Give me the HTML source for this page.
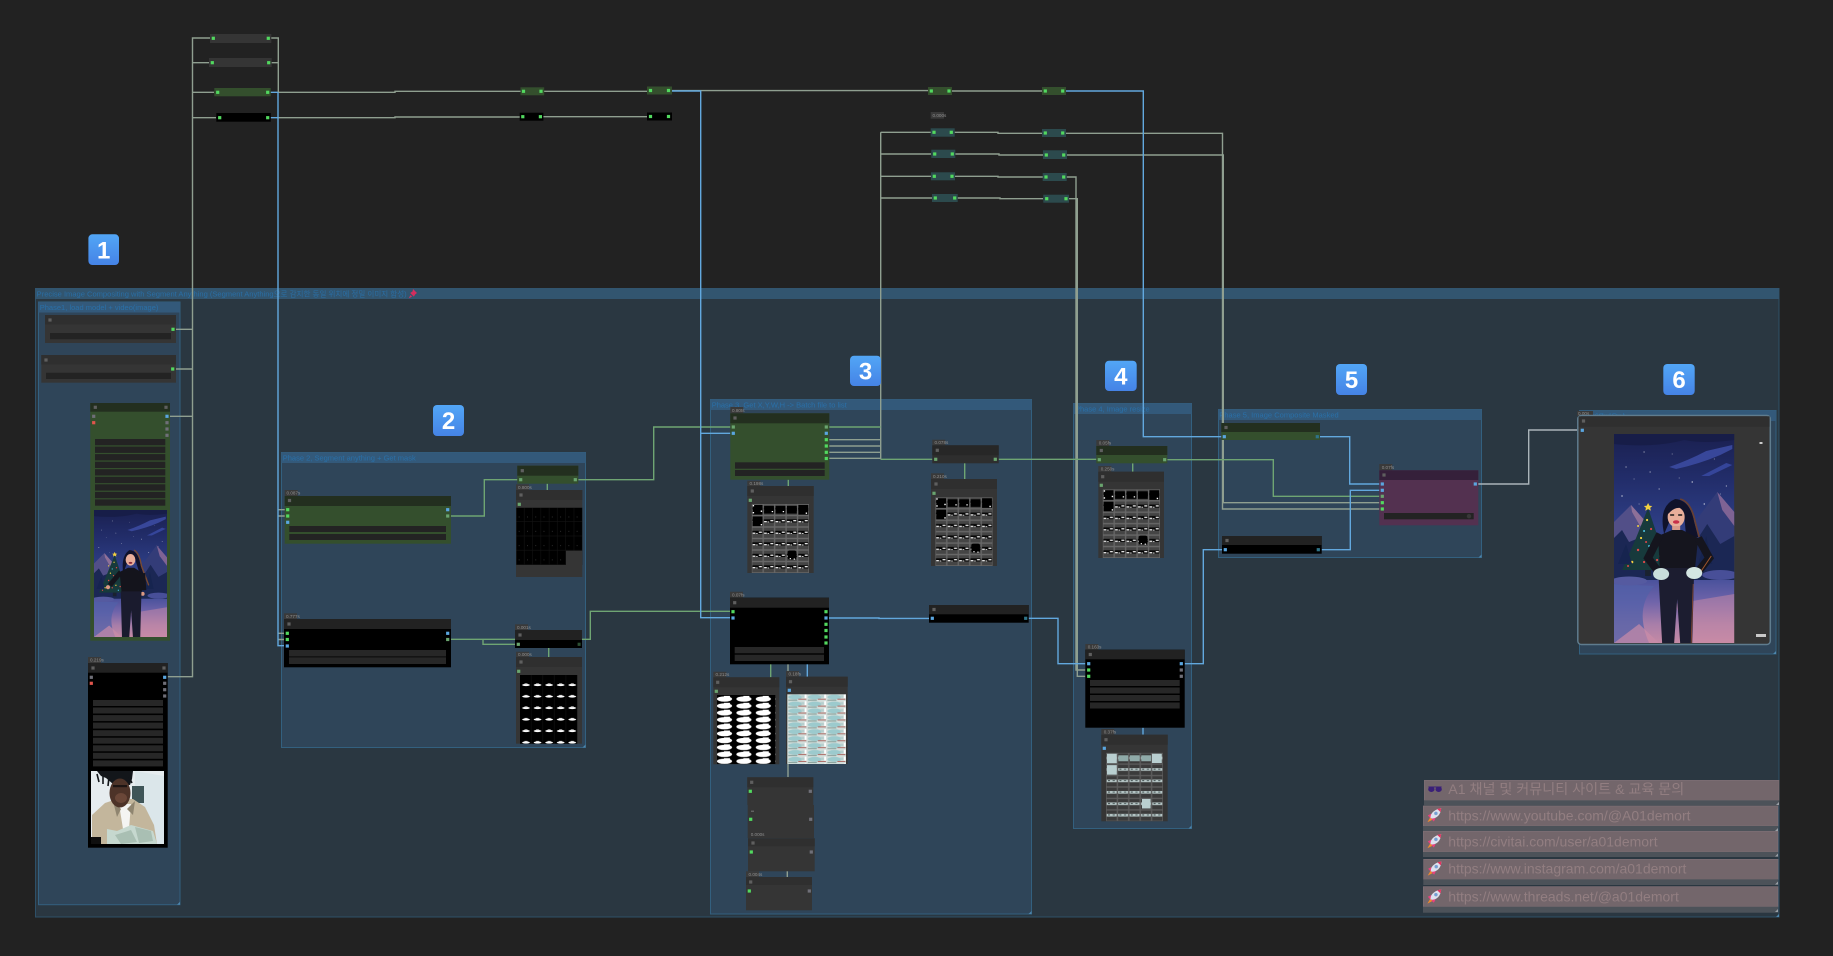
<!DOCTYPE html>
<html lang="en">
<head>
<meta charset="utf-8">
<title>ComfyUI workflow</title>
<style>
html,body{margin:0;padding:0;background:#222;width:1833px;height:956px;overflow:hidden}
svg{display:block}
.g{font:7.5px "Liberation Sans","Noto Sans CJK KR",sans-serif;fill:#2a70a8}
.o{font:7.5px "Liberation Sans","Noto Sans CJK KR",sans-serif;fill:#2a6ea4}
.t{font:4.6px "Liberation Sans",sans-serif;fill:#8f8f8f}
.n{font:14px "Liberation Sans","Noto Sans CJK KR",sans-serif;fill:#927e81}
.b{font:bold 24px "Liberation Sans",sans-serif;fill:#fff;text-anchor:middle}
.tb{fill:#3a3a3a}
.w{fill:#232323}
.wb{fill:#272727}
.grp{fill:#2f4559;stroke:#33607f;stroke-width:1}
.gt{fill:#33597a}
.nb{fill:#353535}
.nh{fill:#2f2f2f}
.bh{fill:#222}
.bk{fill:#000}
.gb{fill:#344f2d}
.gh{fill:#232f1f}
.wire{fill:none;stroke-width:1.4}
</style>
</head>
<body>
<svg xmlns="http://www.w3.org/2000/svg" width="1833" height="956" viewBox="0 0 1833 956">
<defs>
<rect id="pg" x="-1.6" y="-1.6" width="3.2" height="3.2" fill="#52d95f"/>
<rect id="pd" x="-1.6" y="-1.6" width="3.2" height="3.2" fill="#6aa56f"/>
<rect id="pb" x="-1.6" y="-1.6" width="3.2" height="3.2" fill="#5aa6e0"/>
<rect id="pt" x="-1.6" y="-1.6" width="3.2" height="3.2" fill="#2f7488"/>
<rect id="pw" x="-1.6" y="-1.6" width="3.2" height="3.2" fill="#6f6f78"/>
<rect id="pr" x="-1.6" y="-1.6" width="3.2" height="3.2" fill="#e0554c"/>
<rect id="ic" x="-1.6" y="-1.6" width="3.2" height="3.2" fill="#5f5f5f"/>
<linearGradient id="bd" x1="0" y1="0" x2="0" y2="1"><stop offset="0" stop-color="#52a6f6"/><stop offset="1" stop-color="#4583e6"/></linearGradient>
<linearGradient id="sky" x1="0" y1="0" x2="0" y2="1"><stop offset="0" stop-color="#1a2050"/><stop offset=".3" stop-color="#222d6a"/><stop offset=".65" stop-color="#2f4088"/><stop offset="1" stop-color="#384890"/></linearGradient>
<linearGradient id="snow" x1="0" y1="0" x2="0" y2="1"><stop offset="0" stop-color="#4a529c"/><stop offset=".35" stop-color="#7064aa"/><stop offset=".7" stop-color="#a87ea9"/><stop offset="1" stop-color="#c58aa5"/></linearGradient>

<pattern id="pa1" width="11.46" height="11.5" patternUnits="userSpaceOnUse">
<rect width="11.46" height="11.5" fill="#686868"/><rect x=".7" y=".7" width="10.1" height="10.1" fill="#454545"/>
<rect x=".7" y="3.8" width="10.1" height="3.2" fill="#060606"/>
<rect x=".9" y="5.6" width="2.8" height="1.2" fill="#fff"/><rect x="7.2" y="4.6" width="3" height="1.2" fill="#fff"/><rect x="4.4" y="6" width="1.6" height=".9" fill="#ddd"/>
</pattern>
<pattern id="pa2" width="8.28" height="14.3" patternUnits="userSpaceOnUse">
<rect width="8.28" height="14.3" fill="#000"/><path d="M8 0V14.3M0 14H8.28" stroke="#131313" stroke-width=".6"/>
<rect x="2.5" y="9" width=".7" height=".6" fill="#666"/>
</pattern>
<pattern id="pa3" width="11.56" height="11.5" patternUnits="userSpaceOnUse">
<rect width="11.56" height="11.5" fill="#000"/><ellipse cx="6" cy="10" rx="3.9" ry="1.1" fill="#fff"/><rect x="4.5" y="8.4" width="3" height="1.2" fill="#ddd"/>
<path d="M11.2 0V11.5" stroke="#151515" stroke-width=".5"/>
</pattern>
<pattern id="pa4" width="19.4" height="6.92" patternUnits="userSpaceOnUse">
<rect width="19.4" height="6.92" fill="#000"/><ellipse cx="7.5" cy="4" rx="7.6" ry="2.7" fill="#fff"/><rect x="7" y=".9" width="6" height="2" fill="#fff"/>
</pattern>
<pattern id="pa5" width="19.55" height="6.92" patternUnits="userSpaceOnUse">
<rect width="19.55" height="6.92" fill="#d3dedb"/><ellipse cx="8" cy="2.8" rx="7" ry="2.4" fill="#9ccacd"/><rect x="1" y="5.3" width="9" height="1.2" fill="#8ea5a0"/>
<rect x="11" y="4.4" width="8" height="1" fill="#ad6a64"/><rect x="17.4" y="0" width="1.8" height="4" fill="#fff"/><rect x="14" y="1" width="3" height="2.4" fill="#b6cfce"/>
</pattern>
<pattern id="pa6" width="11.4" height="11.5" patternUnits="userSpaceOnUse">
<rect width="11.4" height="11.5" fill="#5c5c5c"/><rect x=".7" y=".7" width="10" height="10.1" fill="#3b3b3b"/>
<rect x=".7" y="4" width="10" height="2.7" fill="#b4c4c4"/><rect x="2" y="4.6" width="2" height="1" fill="#3d4a4a"/><rect x="6.6" y="4.6" width="2.2" height="1" fill="#4a5a5a"/>
</pattern>

<symbol id="gr1" viewBox="0 0 57.3 69" preserveAspectRatio="none">
<rect width="57.3" height="69" fill="url(#pa1)"/>
<g fill="#000"><rect x="1" y="1" width="9.8" height="9.6"/><rect x="12.4" y="2" width="9.8" height="7.6"/><rect x="23.9" y="2" width="9.8" height="7.6"/><rect x="35.3" y="2" width="9.8" height="7.6"/><rect x="46.7" y="1" width="9.8" height="9.6"/><rect x="1" y="12.5" width="9.8" height="9.6"/><rect x="36" y="46.5" width="8.6" height="9" rx="2"/></g>
<g fill="#fff"><rect x="1" y="1" width="1.4" height="1.4"/><rect x="1" y="8" width="1.4" height="1.4"/><rect x="9" y="6.5" width="1.4" height="1.4"/><rect x="20" y="7" width="1.4" height="1.2"/><rect x="31" y="7" width="1.4" height="1.2"/><rect x="54" y="8.5" width="1.4" height="1.4"/><rect x="9" y="20" width="1.4" height="1.4"/><rect x="38" y="54" width="1.2" height="1.2"/><rect x="42" y="54.5" width="1.2" height="1.2"/></g>
</symbol>
<symbol id="gr2" viewBox="0 0 57 69" preserveAspectRatio="none">
<rect width="57" height="69" fill="url(#pa6)"/>
<g fill="#b9cfd0"><rect x="1" y="1" width="9.8" height="9.6"/><rect x="1" y="12.5" width="9.8" height="9.6"/><rect x="46" y="1" width="9.8" height="9.4"/><rect x="36" y="46.5" width="8.6" height="9.6"/></g>
<g fill="#8faaa8"><rect x="12.4" y="2.6" width="9.8" height="6"/><rect x="23.9" y="2.6" width="9.8" height="6"/><rect x="35.3" y="2.6" width="9.8" height="6"/></g>
</symbol>

<symbol id="sc" viewBox="0 0 120 209" preserveAspectRatio="none">
<rect width="120" height="150" fill="url(#sky)"/>
<path d="M0 0H120V6Q90 10 70 6Q40 14 0 10Z" fill="#171d48"/>
<path d="M55 33Q75 26 92 17L118 11V15L106 21Q85 30 62 35Z" fill="#38479a"/>
<path d="M87 42L112 29L118 31L95 42Z" fill="#35459a"/>
<g fill="#fff"><circle cx="12" cy="33" r=".5"/><circle cx="30" cy="18" r=".5"/><circle cx="58" cy="20" r=".4"/><circle cx="78" cy="48" r=".6"/><circle cx="112" cy="52" r=".5"/><circle cx="8" cy="62" r=".6"/><circle cx="45" cy="55" r=".5"/><circle cx="100" cy="25" r=".4"/><circle cx="25" cy="70" r=".4"/><circle cx="90" cy="70" r=".6"/><circle cx="20" cy="45" r=".4"/><circle cx="65" cy="44" r=".4"/><circle cx="36" cy="38" r=".5"/><circle cx="106" cy="60" r=".4"/></g>
<path d="M0 88L17 71L32 88L40 118H0Z" fill="#524f88"/>
<path d="M17 71L32 88L26 92L18 78Z" fill="#8e7098"/>
<path d="M70 102L103 58L120 78V125H66Z" fill="#333c78"/>
<path d="M103 58L120 78V92L108 76Z" fill="#7f6394"/>
<path d="M0 104L8 96L15 108L30 102L72 102L80 110L93 90L106 110L120 102V150H0Z" fill="#1b2754"/>
<rect y="146" width="120" height="63" fill="url(#snow)"/>
<path d="M0 150L40 152Q20 175 35 209H0Z" fill="#5260a8" opacity=".75"/>
<path d="M60 170L120 160V209H80Z" fill="#cb8ca6" opacity=".5"/>
<path d="M0 209L25 190L45 209Z" fill="#c98ca8" opacity=".7"/>
<ellipse cx="15" cy="147" rx="18" ry="4.5" fill="#555aa0"/>
<ellipse cx="106" cy="141" rx="18" ry="5" fill="#484f98"/>
<path d="M34 74L44 104L48 118L52 136H8L16 118L22 104Z" fill="#173a3c"/>
<rect x="31" y="136" width="6" height="6" fill="#1a2230"/>
<path d="M34 69l1.4 2.8 2.8.2-2.1 1.9.7 2.8-2.8-1.6-2.8 1.6.7-2.8-2.1-1.9 2.8-.2z" fill="#f2d040"/>
<g fill="#f2d040"><circle cx="33" cy="86" r="1.1"/><circle cx="27" cy="104" r="1.1"/><circle cx="40" cy="110" r="1.1"/><circle cx="18" cy="128" r="1.3"/><circle cx="36" cy="124" r="1.1"/><circle cx="46" cy="122" r="1"/><circle cx="24" cy="92" r="1"/></g>
<g fill="#e04848"><circle cx="37" cy="95" r="1.1"/><circle cx="24" cy="116" r="1.2"/><circle cx="30" cy="128" r="1.1"/><circle cx="43" cy="126" r="1.1"/><circle cx="32" cy="108" r="1"/><circle cx="14" cy="132" r="1"/></g>
<g fill="#4fc8e8"><circle cx="30" cy="97" r="1"/><circle cx="35" cy="112" r="1"/><circle cx="14" cy="122" r="1"/><circle cx="40" cy="132" r="1"/></g>
<path d="M92 102L98 130H84ZM12 110L18 130H4Z" fill="#16244f"/>
</symbol>

<symbol id="fg" viewBox="0 0 120 209" preserveAspectRatio="none">
<path d="M50 100Q44 72 61 65Q76 66 80 88L84 103L72 104L70 80L56 86Z" fill="#10122a"/>
<path d="M66 65Q77 68 81 88L85 103" fill="none" stroke="#6a4030" stroke-width="1.6"/>
<ellipse cx="62" cy="83" rx="8.5" ry="10" fill="#e8ae9a"/>
<path d="M54 76Q62 68 70 78L66 74Q60 73 54 80Z" fill="#10122a"/>
<path d="M56 81h4M64 81h4" stroke="#1a1a1a" stroke-width="1.4"/>
<ellipse cx="62" cy="88" rx="3.2" ry="1.8" fill="#c8304a"/>
<rect x="58" y="92" width="8" height="6" fill="#d89a8a"/>
<path d="M44 102L58 96H68L84 104L80 142H46Z" fill="#15151e"/>
<path d="M46 100L34 124L46 140" fill="none" stroke="#15151e" stroke-width="8"/>
<path d="M84 104L95 124L82 140" fill="none" stroke="#15151e" stroke-width="8"/>
<path d="M97 122L85 140" fill="none" stroke="#a0562c" stroke-width="1"/>
<path d="M44 134H80L78 209H66L63 165L60 209H48Z" fill="#1c1d30"/>
<path d="M79 150L77 209" fill="none" stroke="#8a4a30" stroke-width=".8"/>
<ellipse cx="47" cy="140" rx="8" ry="6" fill="#c9dedb"/>
<ellipse cx="80" cy="139" rx="8" ry="6" fill="#d4e6e2"/>
</symbol>
<symbol id="fs" viewBox="0 0 120 209" preserveAspectRatio="none">
<path d="M48 104Q44 76 58 66Q72 66 76 88L86 120L76 108L68 82L54 88Z" fill="#10122a"/>
<path d="M66 66Q75 72 78 92L90 124" fill="none" stroke="#7a4a30" stroke-width="2.2"/>
<ellipse cx="60" cy="82" rx="8" ry="9.5" fill="#e8ae9a"/>
<ellipse cx="60" cy="87" rx="3" ry="1.6" fill="#8a2a3a"/>
<path d="M42 102L56 95H66L80 104L78 142H46Z" fill="#14141c"/>
<path d="M44 102L26 124" fill="none" stroke="#14141c" stroke-width="8"/>
<path d="M80 104L82 132" fill="none" stroke="#14141c" stroke-width="8"/>
<circle cx="23" cy="127" r="3.4" fill="#dd9a84"/><circle cx="80" cy="138" r="3.2" fill="#dd9a84"/>
<path d="M44 134H78L76 209H64L61 165L58 209H46Z" fill="#1a1b2e"/>
</symbol>

<symbol id="pf" viewBox="0 0 73 73" preserveAspectRatio="none">
<rect width="73" height="73" fill="#e6ecef"/>
<path d="M44 0L73 5V73H44Z" fill="#dbe6ea"/>
<rect x="41" y="15" width="12" height="17" fill="#3f5558"/>
<path d="M1 44L14 32L26 28H42L54 36L63 54L66 73H1Z" fill="#c3b69c"/>
<path d="M28 33H40L38 58H32Z" fill="#f4f4f2"/>
<path d="M22 30L30 38L26 46ZM44 30L36 38L42 44Z" fill="#8f8570"/>
<path d="M6 0H42L41 8L39 14L22 13L15 7L10 5Z" fill="#13161a"/>
<path d="M6 3l2 8M12 4l0 9M18 6l-1 9M38 6l3 6" stroke="#13161a" stroke-width="1.6"/>
<ellipse cx="29" cy="22" rx="10.5" ry="14.5" fill="#4d3328"/>
<rect x="22" y="14" width="14" height="2.2" fill="#1d1513"/>
<ellipse cx="30" cy="27" rx="6" ry="5" fill="#6a4738"/>
<path d="M16 58L26 60L40 54L62 60L66 73H16Z" fill="#c6d8cf"/>
<path d="M24 64l16-5 6 12-16 2zM44 56l16 4 2 10-14 2z" fill="#a9bfb3"/>
<rect x="0" y="66" width="10" height="7" fill="#0f0f0f"/>
</symbol>

<symbol id="rk" viewBox="0 0 36 36">
<path d="M10 15L2 19L8 26L14 20Z" fill="#e8427e"/>
<path d="M21 26L17 34L10 28L16 22Z" fill="#e8427e"/>
<path d="M8 24L1 36L13 30Z" fill="#f08a2c"/>
<path d="M9 26C7 15 18 4 35 1C34 19 21 29 9 26Z" fill="#dde1ee"/>
<path d="M25 3L35 1L33.4 11Z" fill="#e3345f"/>
<circle cx="22" cy="14" r="4" fill="#6fa0da" stroke="#9aa3b8" stroke-width="1"/>
</symbol>
<symbol id="sg" viewBox="0 0 44 21">
<path d="M2 5H42" stroke="#3a1f78" stroke-width="3"/>
<ellipse cx="11" cy="12" rx="9.5" ry="8" fill="#3a1f78"/><ellipse cx="33" cy="12" rx="9.5" ry="8" fill="#3a1f78"/>
</symbol>
</defs>

<rect width="1833" height="956" fill="#222"/>

<!-- outer group -->
<rect x="35.5" y="288.5" width="1743.5" height="628.5" fill="#2a3741" stroke="#2e5068"/>
<rect x="35" y="288" width="1744" height="11" fill="#32556f"/>
<text class="o" x="36.7" y="296.3" textLength="370" lengthAdjust="spacingAndGlyphs">Precise Image Compositing with Segment Anything (Segment Anything으로 감지한 동일 위치에 정밀 이미지 합성)</text>
<path d="M413 289l4 4-1.6 1.2-1.6 2.4-3.6-3.6 2.4-1.6zM410.5 295l-1.8 3.4 3.4-1.8z" fill="#d42e5e"/>

<!-- groups -->
<rect class="grp" x="38.5" y="302" width="141.5" height="602.7"/><rect class="gt" x="38.5" y="302" width="141.5" height="10.5"/>
<text class="g" x="39.7" y="309.8" textLength="118.7">Phase1, load model + video(image)</text>
<rect class="grp" x="281.5" y="452.5" width="304" height="295"/><rect class="gt" x="281.5" y="452.5" width="304" height="10.5"/>
<text class="g" x="282.7" y="460.5" textLength="133">Phase 2, Segment anything + Get mask</text>
<rect class="grp" x="710.5" y="399.5" width="321" height="514.5"/><rect class="gt" x="710.5" y="399.5" width="321" height="10.5"/>
<text class="g" x="711.7" y="407.5" textLength="135">Phase 3, Get X,Y,W,H -&gt; Batch file to list</text>
<rect class="grp" x="1073.5" y="403.5" width="118" height="425"/><rect class="gt" x="1073.5" y="403.5" width="118" height="10.5"/>
<text class="g" x="1075" y="411.5" textLength="74.7">Phase 4, Image resize</text>
<rect class="grp" x="1218.5" y="409.5" width="263" height="148"/><rect class="gt" x="1218.5" y="409.5" width="263" height="10.5"/>
<text class="g" x="1219.3" y="417.5" textLength="119.4">Phase 5, Image Composite Masked</text>
<rect class="grp" x="1579.5" y="410.5" width="196.5" height="243.5"/><rect class="gt" x="1579.5" y="410.5" width="196.5" height="10.5"/>
<text class="g" x="1581" y="418.5" textLength="44">Phase 6, Check Result</text>
<path d="M180 904.7v-3l-3 3zM585.5 747.5v-3l-3 3zM1031.5 914v-3l-3 3zM1191.5 828.5v-3l-3 3zM1481.5 557.5v-3l-3 3zM1776 654v-3l-3 3zM1779 917v-3l-3 3z" fill="#4d86ad"/>

<!-- wires -->
<g class="wire" stroke="#8f9f90">
<path d="M210 38H192.5V676.7H167.7M209 62.7H192.5M214 92.3H192.5M216 117.7H192.5M176 329.3H192.5M176 369H192.5M170 416.3H192.5"/>
<path d="M271 38H278.3V92M271.5 62.7H278.3"/>
<path d="M278 92.3H395V91.3H647M672 90.6H929M952 91H1042"/>
<path d="M278 117.7H395V117H520M543 116.7H647"/>
<path d="M278 509.7H285M278 516H285M278 633.3H284M278 639.5H284"/>
<path d="M880.7 132.3V459.3M880.7 132.3H931M880.7 154H931M880.7 176.3H931M880.7 198H932"/>
<path d="M954.7 132.3H998V133.3H1042M955.3 154H999V155H1043M955 176.3H998V177H1043M957.7 198H1000V198.7H1043"/>
<path d="M1066 133.3H1222.5V509H1379.3M1067 155H1223.3V502.7H1379.3"/>
<path d="M1066.7 177H1076V670H1085.3M1069 198.7H1077.3V676.3H1085.3"/>
<path d="M829 439.7H880.7M829 446H880.7M829 452.3H880.7M829 458.3H880.7"/>
<path d="M788 664V777M787.3 871V877"/>
</g>
<g class="wire" stroke="#6fa573">
<path d="M829 427H880.7M880.7 459.3H932.3M998.7 459.3H1096.3M1167.3 459.7H1273.3V496.3H1379.3"/>
<path d="M578.3 479.7H653.7V427H730.3M451 516H484.3V479.7H517.3M451 639.3H515M483 639.3V644.3H515M582 639.3H590.3V611.3H730"/>
<path d="M547.3 483.7V490M548.7 648V657M788.3 479.7V486M964.7 463V479M770.7 664V677.3M1132.7 463.3V472"/>
</g>
<g class="wire" stroke="#62a8de">
<path d="M270.7 92.3H278M270.7 117.7H278M278 92V645.7H284"/>
<path d="M672 91H700.7V617.7H730M700.7 433.3H730.3"/>
<path d="M1066 91H1143.3V436.7H1221.3"/>
<path d="M829 618H879V618.4H929M1028.7 618.3H1058V663.7H1085.3M1184.7 663.7H1203.3V549.7H1222M1321.7 549.7H1350.3V490.3H1379.3M1320 436.7H1349.7V484H1379.3"/>
<path d="M807.3 664V677M1143 727.7V734.7"/>
</g>
<path class="wire" stroke="#aab4b9" d="M1478 484H1528.7V430H1577.3"/>

<!-- top reroutes -->
<rect class="nb" x="210" y="34" width="61.3" height="9"/><use href="#pg" x="213.3" y="38.3"/><use href="#pg" x="268.3" y="38.3"/>
<rect class="nb" x="209" y="58" width="62.7" height="9"/><use href="#pg" x="212.3" y="62.7"/><use href="#pg" x="268.7" y="62.7"/>
<rect class="gb" x="214.3" y="88" width="56.4" height="8.3"/><use href="#pg" x="217.7" y="92.3"/><use href="#pg" x="267.7" y="92.3"/>
<rect class="bk" x="216.3" y="113" width="54.4" height="8.7"/><use href="#pg" x="219.7" y="117.7"/><use href="#pg" x="267.7" y="117.7"/>
<rect class="gb" x="520.5" y="87.3" width="23.7" height="8"/><use href="#pg" x="523.5" y="91.3"/><use href="#pg" x="541" y="91.3"/>
<rect class="bk" x="519.7" y="112.7" width="23.7" height="8"/><use href="#pg" x="522.8" y="116.7"/><use href="#pg" x="540.4" y="116.7"/>
<rect class="gb" x="647" y="86.5" width="25" height="8"/><use href="#pg" x="650.5" y="90.5"/><use href="#pg" x="668.5" y="90.5"/>
<rect class="bk" x="647" y="112.5" width="25" height="8"/><use href="#pg" x="650.5" y="116.5"/><use href="#pg" x="668.5" y="116.5"/>
<rect class="gb" x="928" y="87" width="24" height="8"/><use href="#pg" x="931.3" y="91"/><use href="#pg" x="949" y="91"/>
<rect class="gb" x="1042" y="87" width="24" height="8"/><use href="#pg" x="1045.3" y="91"/><use href="#pg" x="1062.7" y="91"/>
<rect class="tb" x="930.7" y="112" width="13.3" height="6.7"/><text class="t" x="932.5" y="117">0.000s</text>
<g fill="#2c4a4d">
<rect x="930.7" y="128.3" width="24" height="8.4"/><rect x="931.3" y="149.7" width="24" height="8.3"/><rect x="931" y="172.3" width="24" height="8"/><rect x="932" y="194" width="25.7" height="8"/>
<rect x="1042" y="129" width="24" height="8"/><rect x="1043" y="150.3" width="24" height="8.7"/><rect x="1042.7" y="173" width="24" height="8"/><rect x="1043.3" y="194.7" width="25.7" height="8"/>
</g>
<use href="#pg" x="934" y="132.3"/><use href="#pg" x="951.3" y="132.3"/><use href="#pg" x="934.7" y="154"/><use href="#pg" x="952.3" y="154"/><use href="#pg" x="934.3" y="176.3"/><use href="#pg" x="952" y="176.3"/><use href="#pg" x="935.3" y="198"/><use href="#pg" x="954.7" y="198"/>
<use href="#pg" x="1045.3" y="133"/><use href="#pg" x="1062.7" y="133"/><use href="#pg" x="1046.3" y="155"/><use href="#pg" x="1063.7" y="155"/><use href="#pg" x="1046" y="177"/><use href="#pg" x="1063.7" y="177"/><use href="#pg" x="1046.7" y="198.7"/><use href="#pg" x="1066" y="198.7"/>

<!-- phase 1 nodes -->
<rect class="nb" x="45" y="315" width="131" height="28"/><rect class="nh" x="45" y="315" width="131" height="9.5"/><use href="#ic" x="50" y="320"/><rect class="w" x="50" y="333" width="121" height="6.3"/><use href="#pg" x="173" y="329.3"/>
<rect class="nb" x="41.3" y="355" width="134.7" height="27.7"/><rect class="nh" x="41.3" y="355" width="134.7" height="9.5"/><use href="#ic" x="46" y="360"/><rect class="w" x="46" y="372.7" width="125" height="6.3"/><use href="#pg" x="172.7" y="369"/>

<rect class="gb" x="90.3" y="403" width="79.7" height="237.7"/><rect class="gh" x="90.3" y="403" width="79.7" height="8.7"/><use href="#ic" x="95.3" y="407.3"/><use href="#ic" x="166" y="407.3"/>
<use href="#pw" x="93.7" y="416.3"/><use href="#pr" x="93.7" y="422.7"/><use href="#pb" x="167" y="416.3"/><use href="#pw" x="167" y="422.7"/><use href="#pw" x="167" y="429"/><use href="#pw" x="167" y="435.3"/>
<g class="w"><rect x="95" y="439" width="70.3" height="6.3"/><rect x="95" y="446.6" width="70.3" height="6.3"/><rect x="95" y="454.1" width="70.3" height="6.3"/><rect x="95" y="461.7" width="70.3" height="6.3"/><rect x="95" y="469.2" width="70.3" height="6.3"/><rect x="95" y="476.8" width="70.3" height="6.3"/><rect x="95" y="484.3" width="70.3" height="6.3"/><rect x="95" y="491.9" width="70.3" height="6.3"/><rect x="95" y="499.4" width="70.3" height="6.3"/></g>
<use href="#sc" x="94" y="510" width="73" height="127"/><use href="#fs" x="94" y="510" width="73" height="127"/>

<rect class="tb" x="88" y="657" width="13" height="6"/><text class="t" x="90" y="661.7">0.219s</text>
<rect class="bk" x="88" y="663" width="79.7" height="184.7"/><rect class="bh" x="88" y="663" width="79.7" height="9.7"/><use href="#ic" x="93" y="668"/><use href="#ic" x="164" y="668"/>
<use href="#pw" x="91.3" y="677.3"/><use href="#pr" x="91.3" y="683.3"/><use href="#pb" x="164.7" y="677.3"/><use href="#pw" x="164.7" y="683.3"/><use href="#pw" x="164.7" y="689.7"/><use href="#pw" x="164.7" y="696"/>
<g class="wb"><rect x="93" y="700" width="70" height="6"/><rect x="93" y="707.5" width="70" height="6"/><rect x="93" y="715.1" width="70" height="6"/><rect x="93" y="722.6" width="70" height="6"/><rect x="93" y="730.2" width="70" height="6"/><rect x="93" y="737.7" width="70" height="6"/><rect x="93" y="745.3" width="70" height="6"/><rect x="93" y="752.8" width="70" height="6"/><rect x="93" y="760.4" width="70" height="6"/></g>
<use href="#pf" x="91" y="771" width="73" height="73"/>

<!-- phase 2 nodes -->
<rect class="tb" x="284.7" y="490" width="13" height="6"/><text class="t" x="286.5" y="494.7">0.087s</text>
<rect class="gb" x="284.7" y="496" width="166.3" height="47.7"/><rect class="gh" x="284.7" y="496" width="166.3" height="10"/><use href="#ic" x="289.5" y="500.5"/>
<use href="#pg" x="287.7" y="509.7"/><use href="#pg" x="287.7" y="516"/><use href="#pb" x="287.7" y="522.3"/><use href="#pb" x="447.7" y="509.7"/><use href="#pd" x="447.7" y="516"/>
<rect class="w" x="289.3" y="526" width="156.7" height="6"/><rect class="w" x="289.3" y="534" width="156.7" height="6"/>

<rect class="tb" x="284" y="613.3" width="13" height="6"/><text class="t" x="286" y="618">0.777s</text>
<rect class="bk" x="284" y="619" width="167" height="48.3"/><rect class="bh" x="284" y="619" width="167" height="10"/><use href="#ic" x="289" y="624"/>
<use href="#pg" x="287.3" y="633.3"/><use href="#pg" x="287.3" y="639.5"/><use href="#pb" x="287.3" y="646"/><use href="#pb" x="447.7" y="633.3"/><use href="#pd" x="447.7" y="639.5"/>
<rect class="wb" x="289" y="650" width="157" height="6.5"/><rect class="wb" x="289" y="657.3" width="157" height="6.7"/>

<rect class="gb" x="517.3" y="465.7" width="61" height="18"/><rect class="gh" x="517.3" y="465.7" width="61" height="10"/><use href="#ic" x="522.3" y="470.7"/><use href="#pd" x="520.7" y="479.7"/><use href="#pd" x="575.3" y="479.7"/>
<rect class="tb" x="516" y="484.3" width="13" height="5.7"/><text class="t" x="518" y="488.8">0.800s</text>
<rect class="nb" x="516" y="490" width="66.3" height="87"/><rect class="nh" x="516" y="490" width="66.3" height="10"/><use href="#ic" x="521" y="495"/><use href="#pd" x="519.3" y="504.3"/>
<g transform="translate(516.3 507.7)"><rect width="66" height="57.3" fill="url(#pa2)"/><rect x="49.7" y="43" width="16.3" height="14.3" fill="#353535"/></g>

<rect class="tb" x="515" y="624.3" width="13" height="5.7"/><text class="t" x="517" y="628.8">0.001s</text>
<rect class="bk" x="515" y="630" width="67" height="18"/><rect class="bh" x="515" y="630" width="67" height="10"/><use href="#ic" x="520" y="635"/><use href="#pd" x="518.3" y="644.3"/><rect x="577.6" y="642.7" width="3" height="3.2" fill="#2c4f33"/>
<rect class="tb" x="516" y="651.7" width="13" height="5.3"/><text class="t" x="518" y="656">0.000s</text>
<rect class="nb" x="516" y="657" width="66" height="86.7"/><rect class="nh" x="516" y="657" width="66" height="10"/><use href="#ic" x="521" y="662"/><use href="#pd" x="518.7" y="671.3"/>
<g transform="translate(520 675)"><rect width="57.3" height="68.7" fill="url(#pa3)"/></g>

<!-- phase 3 nodes -->
<rect class="tb" x="730.3" y="407" width="13" height="6.3"/><text class="t" x="732" y="411.8">0.80ts</text>
<rect class="gb" x="730.3" y="413.3" width="99" height="66.4"/><rect class="gh" x="730.3" y="413.3" width="99" height="10"/><use href="#ic" x="735" y="418"/>
<use href="#pd" x="733.3" y="427"/><use href="#pb" x="733.3" y="433.3"/><use href="#pd" x="826.3" y="427"/><use href="#pb" x="826.3" y="433.3"/><use href="#pg" x="826.3" y="439.7"/><use href="#pg" x="826.3" y="446"/><use href="#pg" x="826.3" y="452.3"/><use href="#pg" x="826.3" y="458.5"/>
<rect class="w" x="735" y="462.3" width="89.7" height="6.4"/><rect class="w" x="735" y="470" width="89.7" height="6"/>

<rect class="tb" x="747.3" y="480.7" width="13" height="5.3"/><text class="t" x="749.5" y="485">0.198s</text>
<rect class="nb" x="747.3" y="486" width="66.4" height="87"/><rect class="nh" x="747.3" y="486" width="66.4" height="10"/><use href="#ic" x="752.3" y="491"/><use href="#pd" x="750.3" y="500.3"/>
<use href="#gr1" x="751.7" y="504" width="57.3" height="69"/>

<rect class="tb" x="932.3" y="439.7" width="13" height="5.6"/><text class="t" x="934.5" y="444.2">0.078s</text>
<rect x="932.3" y="445.3" width="66.4" height="18" fill="#2e2e2e"/><rect x="932.3" y="445.3" width="66.4" height="10" fill="#272727"/><use href="#ic" x="937.3" y="450.3"/><use href="#pd" x="935.7" y="459.3"/><use href="#pd" x="995.3" y="459.3"/>
<rect class="tb" x="931" y="473.3" width="13" height="5.7"/><text class="t" x="933" y="477.8">0.210s</text>
<rect class="nb" x="931" y="479" width="66" height="87"/><rect class="nh" x="931" y="479" width="66" height="10"/><use href="#ic" x="936" y="484"/><use href="#pd" x="934" y="493.3"/>
<use href="#gr1" x="935.3" y="497.3" width="57.4" height="68.7"/>

<rect class="tb" x="730" y="591.7" width="13" height="6"/><text class="t" x="732" y="596.3">0.07fs</text>
<rect class="bk" x="730" y="597.7" width="99" height="66.6"/><rect class="bh" x="730" y="597.7" width="99" height="10"/><use href="#ic" x="734.7" y="602.7"/>
<use href="#pg" x="733" y="611.7"/><use href="#pb" x="733" y="618"/><use href="#pg" x="826" y="611.7"/><use href="#pb" x="826" y="618"/><use href="#pg" x="826" y="624.3"/><use href="#pg" x="826" y="630.5"/><use href="#pg" x="826" y="637"/><use href="#pg" x="826" y="643"/>
<rect class="wb" x="734.7" y="647" width="89.3" height="6.3"/><rect class="wb" x="734.7" y="654.7" width="89.3" height="6.3"/>

<rect class="bk" x="929" y="605" width="99.7" height="17.7"/><rect class="bh" x="929" y="605" width="99.7" height="9.3"/><use href="#ic" x="934" y="609.5"/><use href="#pb" x="932.3" y="618.3"/><use href="#pt" x="1025.7" y="618.3"/>

<rect class="tb" x="713.3" y="671.7" width="13" height="5.6"/><text class="t" x="715.5" y="676">0.212s</text>
<rect class="nb" x="713.3" y="677.3" width="66" height="87"/><rect class="nh" x="713.3" y="677.3" width="66" height="10"/><use href="#ic" x="717.7" y="682.3"/><use href="#pd" x="716.3" y="691.3"/>
<g transform="translate(717 695)"><rect width="58.3" height="69" fill="url(#pa4)"/></g>

<rect class="tb" x="786" y="671" width="13" height="5.7"/><text class="t" x="788.5" y="675.5">0.18fs</text>
<rect class="nb" x="786" y="676.7" width="61.7" height="87.3"/><rect class="nh" x="786" y="676.7" width="61.7" height="10"/><use href="#ic" x="790.5" y="681.7"/><use href="#pb" x="789.3" y="690.3"/>
<g transform="translate(787.3 694.3)"><rect width="58.7" height="69.7" fill="url(#pa5)"/></g>

<rect class="nb" x="747.3" y="777.3" width="66" height="27.7"/><rect class="nh" x="747.3" y="777.3" width="66" height="10"/><use href="#ic" x="751.7" y="782.3"/><use href="#pg" x="750.3" y="791.3"/><use href="#pw" x="810.3" y="791.3"/>
<rect class="nb" x="747.7" y="805" width="66.3" height="33"/><rect x="751" y="810.7" width="3" height="1" fill="#777"/><use href="#pg" x="750.7" y="819.3"/><use href="#pw" x="810.7" y="819.3"/>
<text class="t" x="750.7" y="836">0.000s</text>
<rect class="nb" x="748" y="838.3" width="66.7" height="33"/><rect class="nh" x="748" y="838.3" width="66.7" height="8"/><use href="#ic" x="753" y="843"/><use href="#pg" x="751.3" y="852"/><use href="#pw" x="811.3" y="852"/>
<rect class="tb" x="746" y="871.3" width="13" height="5.7"/><text class="t" x="748.5" y="875.8">0.004s</text>
<rect class="nb" x="746" y="877" width="66" height="33.3"/><rect class="nh" x="746" y="877" width="66" height="8"/><use href="#ic" x="750.7" y="882"/><use href="#pg" x="749.3" y="891"/><use href="#pw" x="809.3" y="891"/>

<!-- phase 4 nodes -->
<rect class="tb" x="1096.3" y="440" width="13" height="6"/><text class="t" x="1098.7" y="444.7">0.05fs</text>
<rect class="gb" x="1096.3" y="446" width="71" height="17.3"/><rect class="gh" x="1096.3" y="446" width="71" height="9"/><use href="#ic" x="1101.3" y="450.5"/><use href="#pd" x="1099.3" y="459.7"/><use href="#pd" x="1164.7" y="459.7"/>
<rect class="tb" x="1098.3" y="466" width="13" height="5.7"/><text class="t" x="1100.7" y="470.5">0.250s</text>
<rect class="nb" x="1098.3" y="471.7" width="65.7" height="86.3"/><rect class="nh" x="1098.3" y="471.7" width="65.7" height="10"/><use href="#ic" x="1102.7" y="476.7"/><use href="#pd" x="1101.3" y="485.3"/>
<use href="#gr1" x="1102.7" y="489.3" width="57.3" height="68.7"/>

<rect class="tb" x="1085.3" y="644" width="13" height="5.7"/><text class="t" x="1087.7" y="648.5">0.163s</text>
<rect class="bk" x="1085.3" y="649.7" width="99.4" height="78"/><rect class="bh" x="1085.3" y="649.7" width="99.4" height="9.6"/><use href="#ic" x="1090.3" y="654.5"/>
<use href="#pb" x="1088.7" y="663.7"/><use href="#pg" x="1088.7" y="670"/><use href="#pg" x="1088.7" y="676.3"/><use href="#pb" x="1181.3" y="663.7"/><use href="#pw" x="1181.3" y="670"/><use href="#pw" x="1181.3" y="676.3"/>
<g class="wb"><rect x="1090" y="680" width="89.7" height="6"/><rect x="1090" y="687.5" width="89.7" height="6"/><rect x="1090" y="695" width="89.7" height="6"/><rect x="1090" y="702.5" width="89.7" height="6"/></g>
<rect class="tb" x="1101.3" y="729" width="13" height="5.7"/><text class="t" x="1103.7" y="733.5">0.37fs</text>
<rect class="nb" x="1101.3" y="734.7" width="66.4" height="86.6"/><rect class="nh" x="1101.3" y="734.7" width="66.4" height="10"/><use href="#ic" x="1106" y="739.7"/><use href="#pb" x="1104.3" y="748.3"/>
<use href="#gr2" x="1106" y="752.7" width="57" height="68.6"/>

<!-- phase 5 nodes -->
<rect class="gb" x="1221.3" y="423" width="98.7" height="17"/><rect class="gh" x="1221.3" y="423" width="98.7" height="9"/><use href="#ic" x="1226" y="427.5"/><use href="#pb" x="1224.3" y="436.7"/><use href="#pt" x="1317.3" y="436.7"/>
<rect class="bk" x="1222" y="536" width="99.7" height="17.7"/><rect class="bh" x="1222" y="536" width="99.7" height="9"/><use href="#ic" x="1227" y="540.5"/><use href="#pb" x="1225.3" y="549.7"/><use href="#pt" x="1318.3" y="549.7"/>
<rect class="tb" x="1379.3" y="464" width="13" height="6.3"/><text class="t" x="1381.7" y="468.8">0.07fs</text>
<rect x="1379.3" y="470.3" width="99" height="55" fill="#533150"/><rect x="1379.3" y="470.3" width="99" height="9.7" fill="#35203a"/><use href="#ic" x="1384" y="475"/>
<use href="#pb" x="1382.3" y="484"/><use href="#pb" x="1382.3" y="490.3"/><use href="#pd" x="1382.3" y="496.3"/><use href="#pg" x="1382.3" y="502.7"/><use href="#pg" x="1382.3" y="509"/><use href="#pb" x="1475.3" y="484"/>
<rect class="w" x="1384" y="513" width="89.7" height="6.3"/><circle cx="1469" cy="516.2" r="2.2" fill="#383838"/>

<!-- phase 6 node -->
<rect class="tb" x="1577" y="411" width="16" height="5"/><text class="t" x="1578" y="415">0.00s</text>
<rect x="1577.8" y="415.5" width="192.5" height="229" rx="3.5" fill="#353535" stroke="#5f7c8e" stroke-width="1.5"/>
<rect x="1578.6" y="416.3" width="191" height="10.4" fill="#2f2f2f"/>
<use href="#ic" x="1583.5" y="421"/><use href="#pb" x="1582.3" y="430.3"/>
<use href="#sc" x="1614" y="434" width="120.3" height="209"/><use href="#fg" x="1614" y="434" width="120.3" height="209"/>
<rect x="1759.5" y="442" width="3" height="2" fill="#ccc"/><rect x="1756" y="634" width="10" height="3" fill="#c8c8c8"/>

<!-- notes -->
<g fill="#73666b" stroke="#7c6e73" stroke-width=".8">
<rect x="1424.4" y="780.4" width="354.5" height="20"/><rect x="1423.4" y="806" width="354.5" height="20"/><rect x="1423.4" y="831.4" width="354.5" height="20.6"/><rect x="1423.7" y="859.4" width="354.3" height="20"/><rect x="1423.4" y="886.7" width="354.5" height="20"/>
</g>
<g fill="#4c5259">
<rect x="1424" y="800.3" width="355.3" height="5.4"/><rect x="1423" y="826" width="355.3" height="5"/><rect x="1423" y="852" width="355.3" height="5"/><rect x="1423.3" y="879.3" width="355" height="5.7"/><rect x="1423" y="906.7" width="355.3" height="6"/>
</g>
<path d="M1779 805v-3l-3 3zM1778 831v-3l-3 3zM1778 856.5v-3l-3 3zM1778 884.5v-3l-3 3zM1778 912v-3l-3 3z" fill="#9aa0a6"/>
<use href="#sg" x="1427.7" y="785.3" width="14.6" height="7"/>
<use href="#rk" x="1427" y="807.7" width="14.6" height="14.6"/>
<use href="#rk" x="1427" y="833.7" width="14.6" height="14.6"/>
<use href="#rk" x="1427.3" y="861" width="14.6" height="14.6"/>
<use href="#rk" x="1427" y="889" width="14.6" height="14.6"/>
<text class="n" x="1448.3" y="794" textLength="236" lengthAdjust="spacingAndGlyphs">A1 채널 및 커뮤니티 사이트 &amp; 교육 문의</text>
<text class="n" x="1448.3" y="820.5">https://www.youtube.com/@A01demort</text>
<text class="n" x="1448.3" y="846.3">https://civitai.com/user/a01demort</text>
<text class="n" x="1448.3" y="873.5">https://www.instagram.com/a01demort</text>
<text class="n" x="1448.3" y="901.3">https://www.threads.net/@a01demort</text>

<!-- badges -->
<rect x="88.4" y="234.3" width="30.6" height="30.7" rx="4" fill="url(#bd)"/><text class="b" x="103.7" y="258.3">1</text>
<rect x="433" y="405" width="31" height="31" rx="4" fill="url(#bd)"/><text class="b" x="448.5" y="429">2</text>
<rect x="850" y="355.7" width="31" height="30.3" rx="4" fill="url(#bd)"/><text class="b" x="865.5" y="379.5">3</text>
<rect x="1105" y="360.7" width="31.7" height="30.3" rx="4" fill="url(#bd)"/><text class="b" x="1120.8" y="384.5">4</text>
<rect x="1336" y="364" width="31" height="31" rx="4" fill="url(#bd)"/><text class="b" x="1351.5" y="388">5</text>
<rect x="1663.3" y="364" width="31.4" height="31" rx="4" fill="url(#bd)"/><text class="b" x="1679" y="388">6</text>
</svg>
</body>
</html>
